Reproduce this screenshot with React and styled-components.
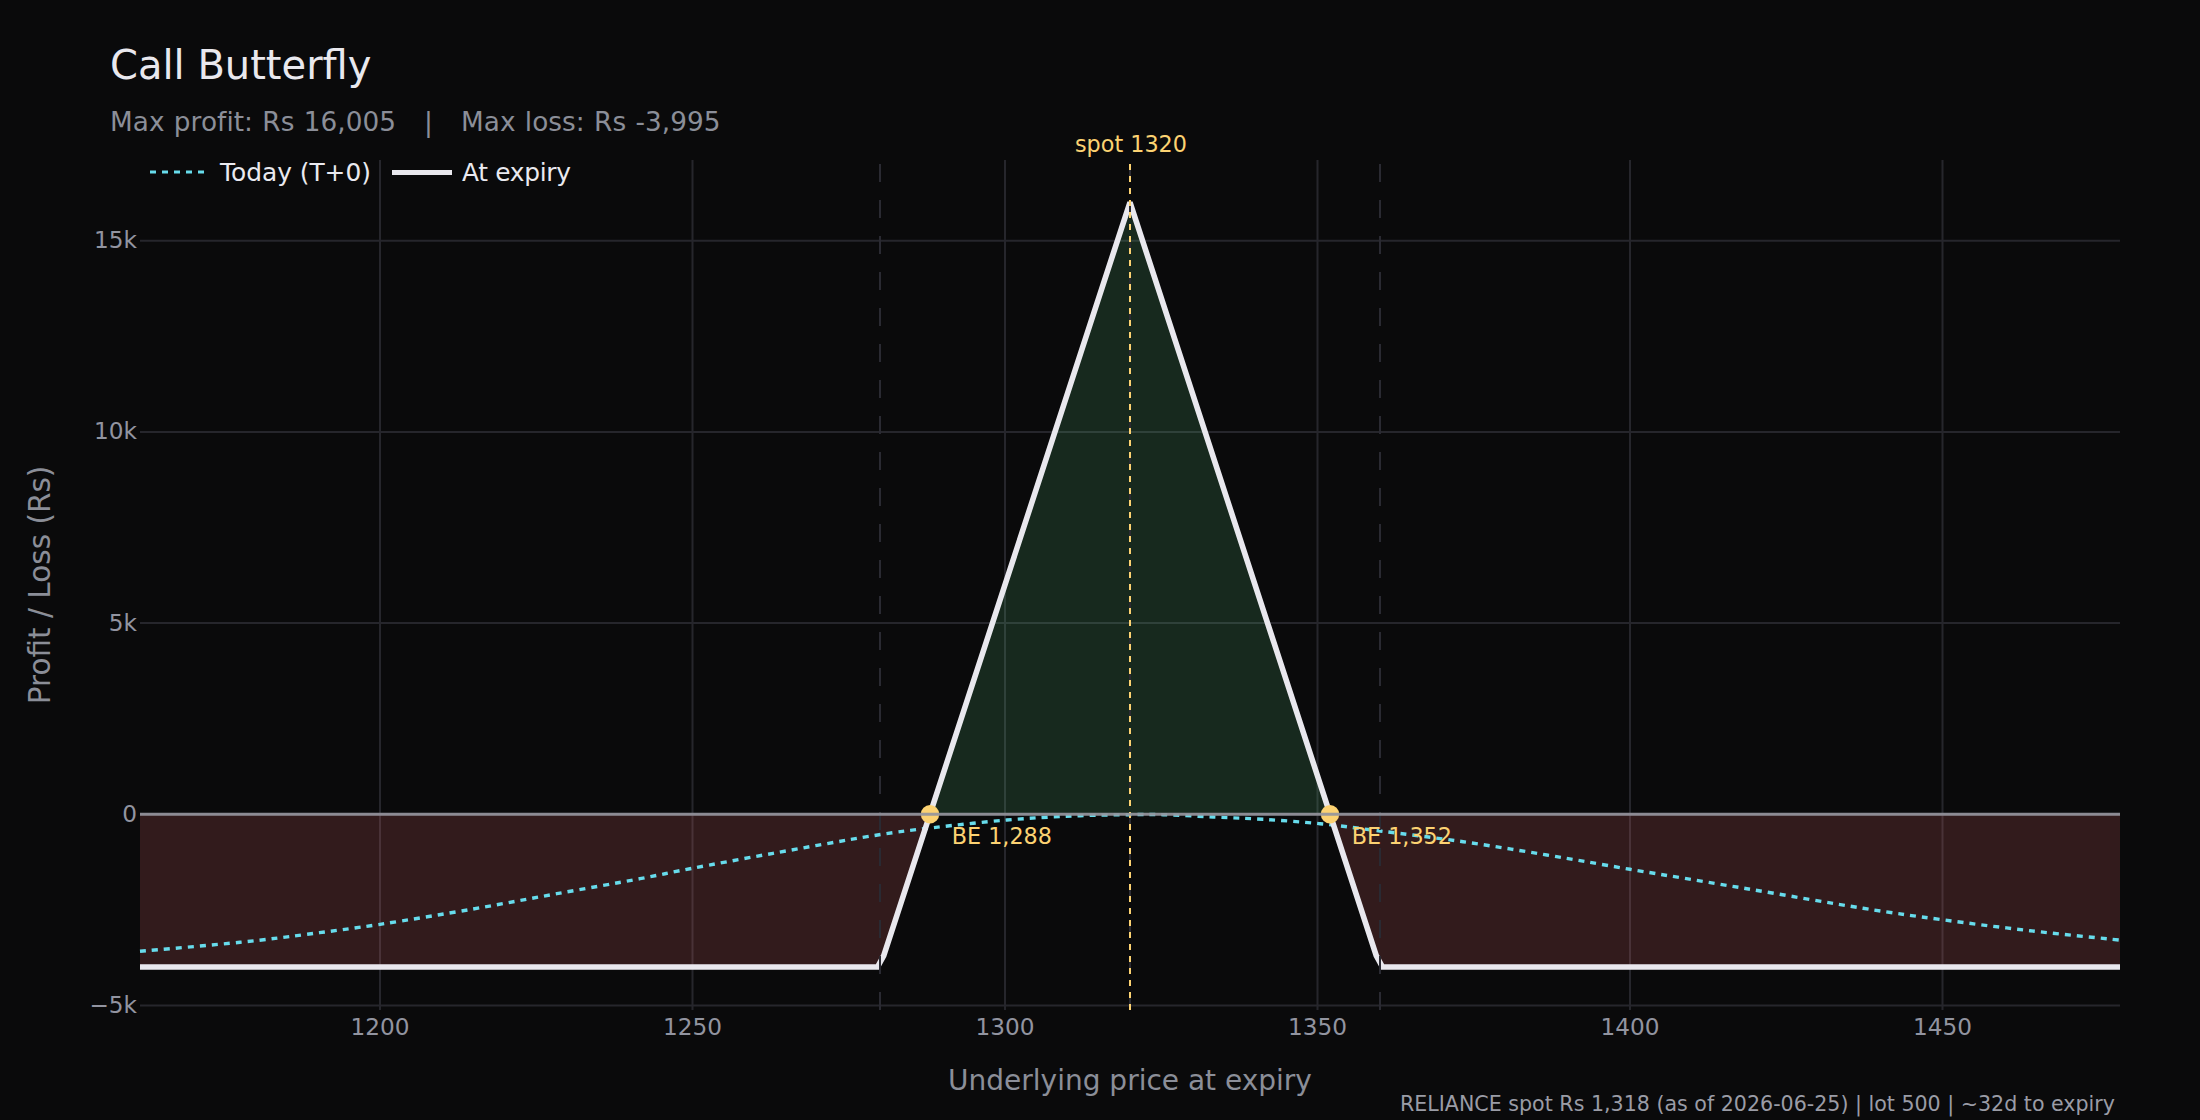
import React from 'react';
import styled, { createGlobalStyle } from 'styled-components';

const BG = '#0a0a0b';
const AMBER = '#fcd272';
const CYAN = '#67dcec';
const WHITE = '#e9e8ee';
const GRID = '#26262c';

// plot area in page pixels
const PLOT = { left: 140, right: 2120, top: 160, bottom: 1006, zero: 814.3 };
const X = (price) => 380 + (price - 1200) * 6.25;
const Y = (pnl) => PLOT.zero - pnl * 0.03824;

const xTicks = [1200, 1250, 1300, 1350, 1400, 1450];
const yTicks = [
  { v: 15000, label: '15k' },
  { v: 10000, label: '10k' },
  { v: 5000, label: '5k' },
  { v: 0, label: '0' },
  { v: -5000, label: '\u22125k' },
];
const strikes = [1280, 1320, 1360];
const breakevens = [1288, 1352];

const today = [
  [1161.6, -3583], [1177.6, -3347], [1188.3, -3138], [1200, -2877], [1214.9, -2476],
  [1228.3, -2076], [1241.6, -1684], [1249.6, -1423], [1262.9, -1020], [1278.9, -560],
  [1288.5, -350], [1300.3, -149], [1310.9, -44], [1320, -10], [1325.3, -10],
  [1333.3, -71], [1341.3, -131], [1350.4, -246], [1360, -437], [1373.3, -717],
  [1386.7, -1064], [1400, -1438], [1418.7, -1946], [1437.3, -2458], [1449.9, -2756],
  [1464, -3044], [1478.4, -3290],
];

// sampled, so the corners at the outer strikes come out cut
const expiry = [
  [1161.6, -3995], [1279.6, -3995], [1280.6, -3695], [1320, 16005],
  [1359.4, -3695], [1360.4, -3995], [1478.4, -3995],
];

const toPx = (pts) => pts.map(([p, v]) => [X(p), Y(v)]);
const polyline = (pts) => toPx(pts).map(([x, y]) => `${x},${y}`).join(' ');

// catmull-rom through the sampled points
const smoothPath = (pts) => {
  const p = toPx(pts);
  let d = `M${p[0][0]},${p[0][1]}`;
  for (let i = 0; i < p.length - 1; i++) {
    const a = p[Math.max(i - 1, 0)];
    const b = p[i];
    const c = p[i + 1];
    const e = p[Math.min(i + 2, p.length - 1)];
    const c1x = b[0] + (c[0] - a[0]) / 6;
    const c1y = b[1] + (c[1] - a[1]) / 6;
    const c2x = c[0] - (e[0] - b[0]) / 6;
    const c2y = c[1] - (e[1] - b[1]) / 6;
    d += ` C${c1x},${c1y} ${c2x},${c2y} ${c[0]},${c[1]}`;
  }
  return d;
};

const GlobalStyle = createGlobalStyle`
  html, body {
    margin: 0;
    padding: 0;
    background: ${BG};
  }
  body {
    font-family: "DejaVu Sans", sans-serif;
    overflow: hidden;
  }
`;

const Page = styled.div`
  width: 2200px;
  height: 1120px;
  display: flex;
  flex-direction: column;
  background: ${BG};
`;

const Header = styled.header`
  box-sizing: border-box;
  height: 140px;
  padding: 40px 0 0 110px;
`;

const Title = styled.h1`
  margin: 0;
  font-size: 40px;
  line-height: 50px;
  font-weight: 400;
  color: #e9e8ee;
`;

const Subtitle = styled.p`
  margin: 16px 0 0;
  font-size: 26.3px;
  line-height: 32px;
  letter-spacing: 0.06px;
  word-spacing: 0.9px;
  color: #8b8e98;
  white-space: pre;
`;

const Figure = styled.div`
  position: relative;
  flex: 1;
`;

const Chart = styled.svg`
  display: block;
  overflow: visible;
`;

const Legend = styled.div`
  position: absolute;
  left: 150px;
  top: 14px;
  display: flex;
  align-items: center;
  height: 36px;
  font-size: 24.85px;
  color: #eaeaf0;
`;

const LegendItem = styled.div`
  display: flex;
  align-items: center;
  gap: ${(p) => p.$gap}px;
  margin-right: 21px;
  letter-spacing: ${(p) => p.$tracking || 0}px;
`;

const Swatch = styled.svg`
  display: block;
`;

const TickLabel = styled.text`
  font-size: 23.2px;
  fill: #9294a0;
  text-anchor: ${(p) => p.$anchor};
`;

const AxisTitle = styled.text`
  font-size: ${(p) => p.$size}px;
  fill: #8b8e98;
  text-anchor: middle;
`;

const Annotation = styled.text`
  font-size: 22.3px;
  fill: ${AMBER};
  text-anchor: ${(p) => p.$anchor || 'start'};
`;

const Footnote = styled.text`
  font-size: 20.6px;
  fill: #9a9ca6;
  text-anchor: end;
`;

const GridLine = styled.line`
  stroke: ${GRID};
  stroke-width: 2;
`;

const StrikeLine = styled.line`
  stroke: #2a2a32;
  stroke-width: 2;
  stroke-dasharray: 18 18;
`;

const SpotLine = styled.line`
  stroke: ${AMBER};
  stroke-width: 2;
  stroke-dasharray: 6 6;
`;

const ZeroLine = styled.line`
  stroke: #94949c;
  stroke-width: 3;
  stroke-opacity: 0.92;
`;

const Area = styled.polygon`
  fill: ${(p) => p.$fill};
`;

const ExpiryLine = styled.polyline`
  fill: none;
  stroke: ${WHITE};
  stroke-width: 5.6;
  stroke-linejoin: miter;
  stroke-miterlimit: 2;
`;

const TodayLine = styled.path`
  fill: none;
  stroke: ${CYAN};
  stroke-width: 3.4;
  stroke-dasharray: 6 6;
`;

const Marker = styled.circle`
  fill: ${AMBER};
`;

const LOSS = 'rgba(248, 113, 113, 0.17)';
const GAIN = 'rgba(100, 222, 140, 0.15)';

export default function App() {
  const lossY = Y(-3995);
  return (
    <Page>
      <GlobalStyle />
      <Header>
        <Title>Call Butterfly</Title>
        <Subtitle>Max profit: Rs 16,005   |   Max loss: Rs -3,995</Subtitle>
      </Header>
      <Figure>
        <Chart width="2200" height="980" viewBox="0 140 2200 980">
          {xTicks.map((t) => (
            <GridLine key={t} x1={X(t)} x2={X(t)} y1={PLOT.top} y2={PLOT.bottom + 4} />
          ))}
          {yTicks.map((t) => (
            <GridLine key={t.v} x1={PLOT.left} x2={PLOT.right} y1={Y(t.v)} y2={Y(t.v)} />
          ))}

          <Area $fill={LOSS} points={`${PLOT.left},${PLOT.zero} ${X(1288)},${PLOT.zero} ${X(1280)},${lossY} ${PLOT.left},${lossY}`} />
          <Area $fill={LOSS} points={`${X(1352)},${PLOT.zero} ${PLOT.right},${PLOT.zero} ${PLOT.right},${lossY} ${X(1360)},${lossY}`} />
          <Area $fill={GAIN} points={`${X(1288)},${PLOT.zero} ${X(1320)},${Y(16005)} ${X(1352)},${PLOT.zero}`} />

          <TodayLine d={smoothPath(today)} />
          <ExpiryLine points={polyline(expiry)} />

          {breakevens.map((b) => (
            <Marker key={b} cx={X(b)} cy={PLOT.zero} r="9.2" />
          ))}

          {strikes.map((s) => (
            <StrikeLine key={s} x1={X(s)} x2={X(s)} y1={164} y2={1010} />
          ))}
          <SpotLine x1={X(1320)} x2={X(1320)} y1={164} y2={1010} />
          <ZeroLine x1={PLOT.left} x2={PLOT.right} y1={PLOT.zero} y2={PLOT.zero} />

          {yTicks.map((t) => (
            <TickLabel key={t.v} $anchor="end" x={137} y={Y(t.v) + 7.5}>{t.label}</TickLabel>
          ))}
          {xTicks.map((t) => (
            <TickLabel key={t} $anchor="middle" x={X(t)} y={1035}>{t}</TickLabel>
          ))}

          <Annotation $anchor="middle" x={1131} y={151.5}>spot 1320</Annotation>
          <Annotation x={951.7} y={843.5}>BE 1,288</Annotation>
          <Annotation x={1351.7} y={843.5}>BE 1,352</Annotation>

          <AxisTitle $size={28} x={1130} y={1090}>Underlying price at expiry</AxisTitle>
          <AxisTitle $size={29.5} transform="translate(50 585) rotate(-90)">Profit / Loss (Rs)</AxisTitle>
          <Footnote x={2115} y={1111}>RELIANCE spot Rs 1,318 (as of 2026-06-25) | lot 500 | ~32d to expiry</Footnote>
        </Chart>
        <Legend>
          <LegendItem $gap={16}>
            <Swatch width="54" height="4" viewBox="0 0 54 4">
              <line x1="0" y1="2" x2="54" y2="2" stroke={CYAN} strokeWidth="3" strokeDasharray="6 6" />
            </Swatch>
            Today (T+0)
          </LegendItem>
          <LegendItem $gap={10} $tracking={-0.3}>
            <Swatch width="60" height="5" viewBox="0 0 60 5">
              <line x1="0" y1="2.5" x2="60" y2="2.5" stroke={WHITE} strokeWidth="5" />
            </Swatch>
            At expiry
          </LegendItem>
        </Legend>
      </Figure>
    </Page>
  );
}
